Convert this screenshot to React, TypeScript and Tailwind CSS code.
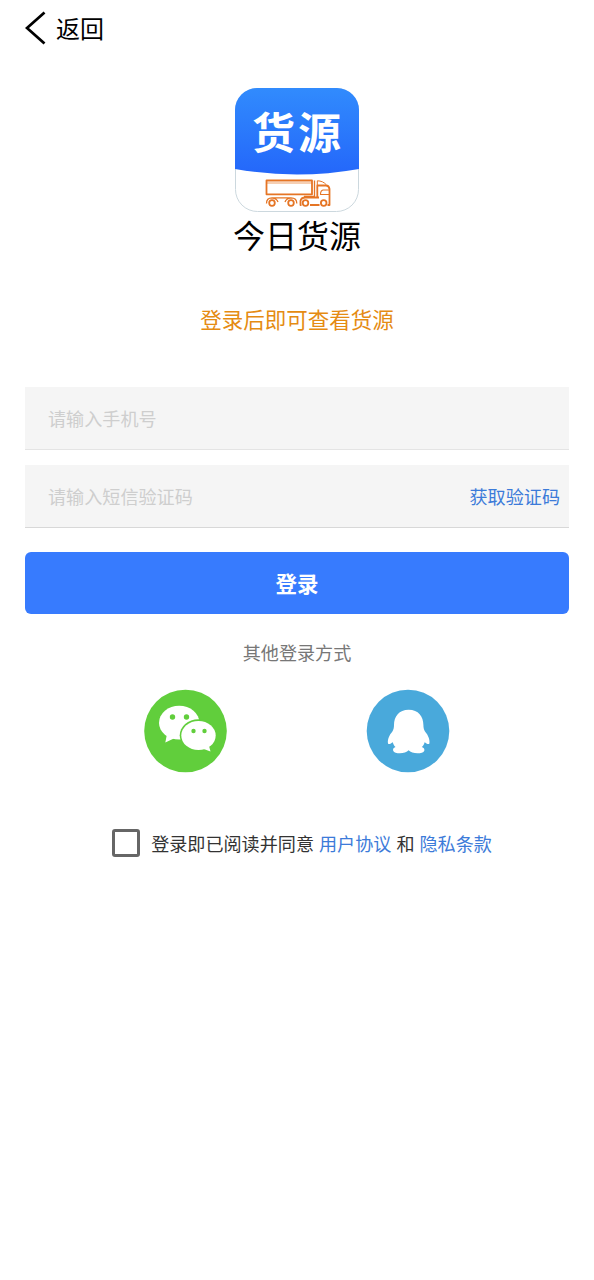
import { useState } from 'react'

function AppLogo() {
  return (
    <svg viewBox="0 0 124 124" className="size-31" role="img" aria-label="货源">
      <defs>
        <linearGradient id="logo-sky" x1="0" y1="0" x2="0" y2="1">
          <stop offset="0" stopColor="#318bfd" />
          <stop offset="1" stopColor="#2467fa" />
        </linearGradient>
        <clipPath id="logo-shape">
          <rect width="124" height="124" rx="22" />
        </clipPath>
      </defs>
      <rect x="0.5" y="0.5" width="123" height="123" rx="22" fill="#fff" stroke="#ccd8de" />
      <path clipPath="url(#logo-shape)" d="M0 0H124V81Q62 92 0 81Z" fill="url(#logo-sky)" />
      <text
        x="17"
        y="60.5"
        fill="#fff"
        fontSize="43"
        fontWeight="700"
        letterSpacing="3"
        fontFamily="'Noto Sans CJK SC', sans-serif"
      >
        货源
      </text>
      <g fill="none" stroke="#e57525" strokeWidth="1.8" strokeLinejoin="round">
        <path d="M31.5 92.5H77V106.3H31.5Z" />
        <path d="M31.5 95H77" strokeWidth="0.7" />
        <path d="M79.5 92.5V108.5H69" strokeWidth="1.3" />
        <path d="M82.3 108.5V97.5H91Q94 97.5 94.5 101V117H92.5M84.5 117H75M66.5 117H65.5V113Q66 109.5 70.5 109.5H84" />
        <path d="M82.3 97V92.8Q88 92.8 91.5 97" strokeWidth="1" />
        <path d="M94.5 102H88Q85.5 102.5 85.5 106.5H94.5" strokeWidth="1.1" />
        <path d="M31.5 115.5Q31.5 109.8 37 109.8H56Q61.8 109.8 61.8 115.5M37 109.8Q42 110.5 43 114M56 109.8Q51 110.5 50 114" strokeWidth="1.3" />
        <circle cx="37" cy="115" r="2.8" />
        <circle cx="56" cy="115" r="2.8" />
        <circle cx="70.5" cy="115" r="2.8" />
        <circle cx="88.7" cy="115" r="2.8" />
      </g>
    </svg>
  )
}

function WechatIcon() {
  return (
    <svg viewBox="0 0 100 100" className="size-25">
      <circle cx="50.5" cy="51" r="41.3" fill="#61ce3c" />
      <g fill="#fff">
        <ellipse cx="44.2" cy="42.7" rx="20.2" ry="16.9" />
        <path d="M32 54L30.3 62.5L41 57.5Z" />
      </g>
      <ellipse cx="63.3" cy="55.3" rx="18.6" ry="16" fill="#61ce3c" />
      <ellipse cx="63.5" cy="55.5" rx="17.2" ry="14.6" fill="#fff" />
      <path d="M66 68L75.5 71.5L73.5 64Z" fill="#fff" />
      <g fill="#61ce3c">
        <circle cx="37.5" cy="37" r="2.7" />
        <circle cx="51.5" cy="37" r="2.7" />
        <circle cx="58.5" cy="51" r="2.2" />
        <circle cx="69.5" cy="51" r="2.2" />
      </g>
    </svg>
  )
}

function QQIcon() {
  return (
    <svg viewBox="0 0 100 100" className="size-25">
      <circle cx="50" cy="51" r="41.3" fill="#49a9db" />
      <path
        fill="#fff"
        d="M50.7 29.7C41 29.7 36 36.5 36 45C36 47.5 35.6 49.5 34.4 51.5C31.2 55 29.3 60 30 63.5C31 65 33.3 63 34.8 62.2C35.2 64 36 65.8 37.5 67C35.3 67.8 34.7 69.3 35.2 70.7C36.5 74.3 47.5 74.2 50.6 70.3C53.7 74.2 65 74.3 66.3 70.7C66.8 69.3 66 67.8 63.8 67C65.5 65.8 66.2 64 66.6 62.2C68.1 63 70.4 65 71.4 63.5C72.1 60 70.2 55 67 51.5C65.8 49.5 65.4 47.5 65.4 45C65.4 36.5 60.4 29.7 50.7 29.7Z"
      />
    </svg>
  )
}

export default function App() {
  const [phone, setPhone] = useState('')
  const [code, setCode] = useState('')
  const [agreed, setAgreed] = useState(false)

  return (
    <div className="min-h-screen bg-white font-['Noto_Sans_CJK_SC',sans-serif] text-black">
      <header className="flex h-14 items-center pl-[25px]">
        <button type="button" className="flex items-center text-2xl leading-none">
          <svg viewBox="0 0 22 34" className="mr-[9px] h-[34px] w-[22px]">
            <path d="M19.5 1.5L2 17L19.5 32.5" fill="none" stroke="#000" strokeWidth="2.8" />
          </svg>
          返回
        </button>
      </header>

      <main className="flex flex-col items-center px-[25px] pt-8">
        <AppLogo />
        <h1 className="text-[32px] leading-[44px]">今日货源</h1>
        <p className="mt-[47px] text-[21.5px] leading-8 text-[#e58b12]">登录后即可查看货源</p>

        <div className="mt-[52px] w-full">
          <div className="flex h-[63px] items-center border-b border-[#e4e4e4] bg-[#f5f5f5] px-[23px] pt-0.5">
            <input
              type="tel"
              value={phone}
              onChange={(e) => setPhone(e.target.value)}
              placeholder="请输入手机号"
              className="w-full text-[18.1px] outline-none placeholder:text-[#cecece]"
            />
          </div>
          <div className="mt-[15px] flex h-[63px] items-center border-b border-[#d8d8d8] bg-[#f5f5f5] pt-0.5 pr-[9px] pl-[23px]">
            <input
              value={code}
              onChange={(e) => setCode(e.target.value)}
              placeholder="请输入短信验证码"
              className="min-w-0 flex-1 text-[18.1px] outline-none placeholder:text-[#cecece]"
            />
            <button type="button" className="text-[18.1px] text-[#3c7bd9]">
              获取验证码
            </button>
          </div>
          <button
            type="button"
            className="mt-6 h-[62px] w-full rounded-md bg-[#377bfe] text-[21.5px] font-bold text-white"
          >
            登录
          </button>
        </div>

        <p className="mt-6 text-[18.1px] leading-7 text-[#777777]">其他登录方式</p>

        <div className="mt-[14px] mr-[2px] flex gap-[123px]">
          <button type="button" aria-label="微信登录">
            <WechatIcon />
          </button>
          <button type="button" aria-label="QQ登录">
            <QQIcon />
          </button>
        </div>

        <div className="mt-[49px] ml-[10px] flex items-center text-[18.1px] leading-7 text-[#333333]">
          <label className="flex items-center">
            <input
              type="checkbox"
              checked={agreed}
              onChange={(e) => setAgreed(e.target.checked)}
              className="mr-[11px] size-7 appearance-none rounded-[3px] border-[3px] border-[#666666] checked:bg-[#377bfe]"
            />
            登录即已阅读并同意
          </label>
          <a className="mx-[5px] text-[#3c7bd9]">用户协议</a>
          和
          <a className="ml-[5px] text-[#3c7bd9]">隐私条款</a>
        </div>
      </main>
    </div>
  )
}
